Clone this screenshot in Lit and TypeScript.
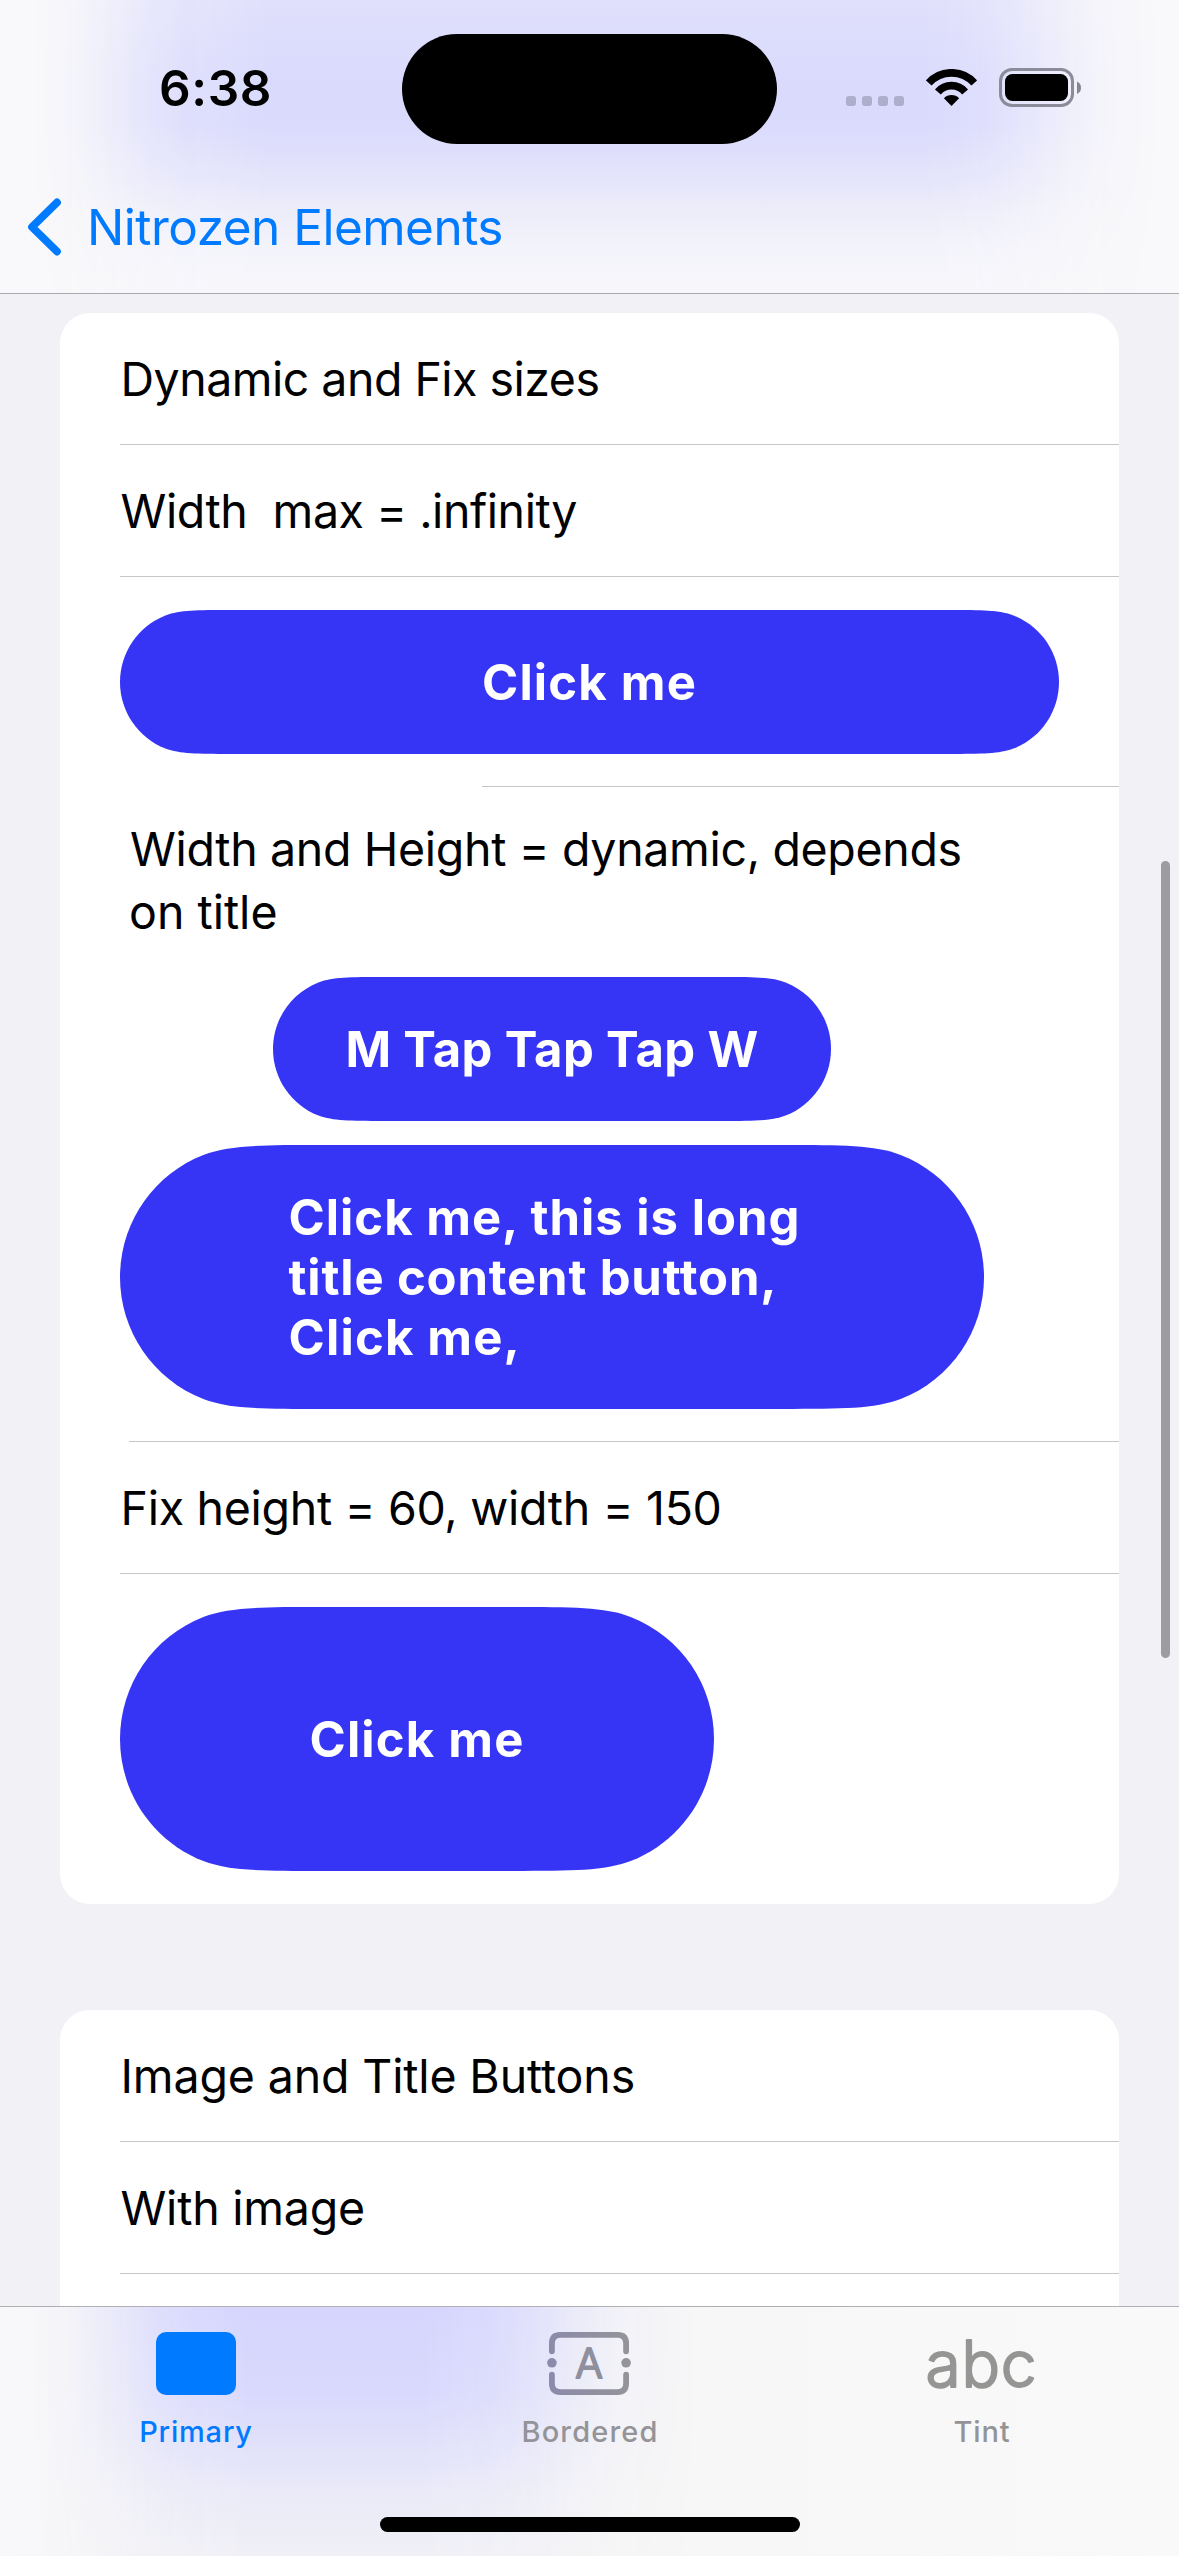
import { LitElement, html, svg, css, nothing } from "lit";
import { customElement, property } from "lit/decorators.js";

type Row =
  | { kind: "text"; text: string; tracking: number }
  | { kind: "button"; title: string; width: number; height: number; lineInset: number | null }
  | { kind: "stack" };

const FIRST_SECTION: Row[] = [
  { kind: "text", text: "Dynamic and Fix sizes", tracking: -0.51 },
  { kind: "text", text: "Width\u00a0 max = .infinity", tracking: -0.43 },
  { kind: "button", title: "Click me", width: 939, height: 144, lineInset: 422 },
  { kind: "stack" },
  { kind: "text", text: "Fix height = 60, width = 150", tracking: -0.29 },
  { kind: "button", title: "Click me", width: 594, height: 264, lineInset: null },
];

const SECOND_SECTION: Row[] = [
  { kind: "text", text: "Image and Title Buttons", tracking: -0.14 },
  { kind: "text", text: "With image", tracking: -0.22 },
];

/** Capsule whose straight edges ease into the round ends (continuous corners). */
function capsulePath(w: number, h: number): string {
  const r = h / 2;
  const corner = (fx: (v: number) => number, fy: (v: number) => number, out: boolean) => {
    const pts = [
      [1.5287, 0], [1.07, 0], [0.832, 0], [0.6315, 0.0749],
      [0.2505, 0.2235], [0, 0.59], [0, 1],
    ].map(([x, y]) => `${fx(x * r).toFixed(2)} ${fy(y * r).toFixed(2)}`);
    const p = out ? pts : pts.reverse();
    return `L${p[0]}C${p[1]} ${p[2]} ${p[3]}C${p[4]} ${p[5]} ${p[6]}`;
  };
  const left = (v: number) => v;
  const right = (v: number) => w - v;
  const top = (v: number) => v;
  const bottom = (v: number) => h - v;
  return (
    `M${w / 2} 0` + corner(right, top, true) + corner(right, bottom, false) +
    corner(left, bottom, true) + corner(left, top, false) + "Z"
  );
}

@customElement("pill-button")
class PillButton extends LitElement {
  @property({ type: Number }) width = 0;
  @property({ type: Number }) height = 0;

  static styles = css`
    :host { display: block; }
    .pill {
      position: relative;
      display: flex;
      align-items: center;
      justify-content: center;
      box-sizing: border-box;
      padding: 2px 0 0;
      border: 0;
      background: none;
      color: #fff;
      font: 700 49px/60px Inter, "Liberation Sans", sans-serif;
      text-align: left;
    }
    .shape { position: absolute; left: 0; top: 0; }
    .label { position: relative; white-space: nowrap; }
  `;

  render() {
    const { width: w, height: h } = this;
    return html`
      <button class="pill" style="width:${w}px;height:${h}px">
        <svg class="shape" width=${w} height=${h} viewBox="0 0 ${w} ${h}">
          ${svg`<path d=${capsulePath(w, h)} fill="#3634f5"></path>`}
        </svg>
        <span class="label"><slot></slot></span>
      </button>
    `;
  }
}

@customElement("status-bar")
class StatusBar extends LitElement {
  static styles = css`
    :host { display: block; }
    .status {
      position: relative;
      display: flex;
      align-items: center;
      height: 175px;
      padding: 0 98px 0 159px;
    }
    .time { font-weight: 600; font-size: 49.5px; line-height: 60px; letter-spacing: 0.6px; color: #000; }
    .island {
      position: absolute;
      left: 402px;
      top: 34px;
      width: 375px;
      height: 110px;
      border-radius: 55px;
      background: #000;
    }
    .icons { display: flex; align-items: center; gap: 22px; margin-left: auto; }
    .cell { display: flex; gap: 6px; padding-top: 27px; }
    .dot { width: 10px; height: 10px; border-radius: 3px; background: #afadcc; }
    svg { display: block; }
  `;

  render() {
    return html`
      <div class="status">
        <span class="time">6:38</span>
        <div class="island"></div>
        <div class="icons">
          <div class="cell">${[0, 1, 2, 3].map(() => html`<i class="dot"></i>`)}</div>
          <svg width="51" height="37" viewBox="0 0 51 37">
            <g fill="none" stroke="#000" stroke-width="7.7">
              <path d="M2.7 14A30.6 30.6 0 0 1 48.3 14"></path>
              <path d="M11.9 22.9A17.9 17.9 0 0 1 39.1 22.9"></path>
            </g>
            <path d="M25.5 37L17.9 29.2A10.6 10.6 0 0 1 33.1 29.2Z"></path>
          </svg>
          <svg width="82" height="39" viewBox="0 0 82 39">
            <rect x="1.5" y="1.5" width="72" height="36" rx="11.5" fill="none" stroke="#8c8b9a" stroke-width="3"></rect>
            <rect x="6" y="6" width="63" height="27" rx="7.5"></rect>
            <path d="M78 13.5C80.8 14.8 82 17 82 19.7C82 22.4 80.8 24.6 78 26Z" fill="#86868e"></path>
          </svg>
        </div>
      </div>
    `;
  }
}

@customElement("tab-bar")
class TabBar extends LitElement {
  static styles = css`
    :host { display: block; }
    .bar {
      position: relative;
      display: flex;
      flex-direction: column;
      justify-content: space-between;
      align-items: center;
      box-sizing: border-box;
      height: 250px;
      border-top: 1px solid #b0b0b3;
      background: linear-gradient(90deg, #f8f8fb, #f7f7f8 10%, #f7f7f7 60%, #f9f9fa);
    }
    .glow {
      position: absolute;
      inset: 0;
      background: linear-gradient(#d5d5fe, #d9d9fd 34%, #e1e1fb 55%, #eaeaf8 75%, #f0f0f6);
      mask-image: linear-gradient(90deg, transparent 30px, rgba(0,0,0,.08) 65px, rgba(0,0,0,.24) 92px,
        rgba(0,0,0,.45) 124px, rgba(0,0,0,.7) 155px, rgba(0,0,0,.86) 190px, #000 250px, #000 420px,
        rgba(0,0,0,.86) 490px, rgba(0,0,0,.62) 536px, rgba(0,0,0,.36) 575px, rgba(0,0,0,.15) 617px, transparent 700px);
    }
    .tabs { position: relative; display: grid; grid-template-columns: repeat(3, 393px); }
    .tab { display: flex; flex-direction: column; align-items: center; padding: 25px 1px 0 0; color: #949498; }
    .tab.active { color: #007aff; }
    .art { display: flex; align-items: center; justify-content: center; height: 63px; }
    .art svg { display: block; overflow: visible; }
    .label { margin-top: 18px; font-weight: 500; font-size: 29px; line-height: 37px; }
    .wide { padding-left: 2px; letter-spacing: 1.15px; }
    .near { letter-spacing: 0.8px; }
    .block { width: 80px; height: 63px; border-radius: 10px; background: #007aff; }
    .home { position: relative; width: 420px; height: 15px; margin-bottom: 24px; border-radius: 8px; background: #000; }
  `;

  render() {
    return html`
      <div class="bar">
        <div class="glow"></div>
        <div class="tabs">
          <div class="tab active">
            <div class="art"><div class="block"></div></div>
            <span class="label near">Primary</span>
          </div>
          <div class="tab">
            <div class="art">
              <svg width="84" height="63" viewBox="0 0 84 63" font-family="Inter, sans-serif">
                <defs>
                  <linearGradient id="tone" gradientUnits="userSpaceOnUse" x1="0" y1="0" x2="84" y2="0">
                    <stop offset="0" stop-color="#8b8aab"></stop>
                    <stop offset="1" stop-color="#949498"></stop>
                  </linearGradient>
                </defs>
                <g fill="none" stroke="url(#tone)" stroke-width="5.8" stroke-linecap="round">
                  <path d="M4.9 19.3V11.4Q4.9 2.9 13.4 2.9H70.6Q79.1 2.9 79.1 11.4V19.3"></path>
                  <path d="M4.9 42.7V51.6Q4.9 60.1 13.4 60.1H70.6Q79.1 60.1 79.1 51.6V42.7"></path>
                </g>
                <g fill="url(#tone)">
                  <circle cx="4.9" cy="30.8" r="4.8"></circle>
                  <circle cx="79.1" cy="30.8" r="4.8"></circle>
                </g>
                <text x="42" y="46.2" text-anchor="middle" font-size="41" font-weight="300" fill="#8f8f9e"
                  stroke="#8f8f9e" stroke-width="2" stroke-linejoin="round">A</text>
              </svg>
            </div>
            <span class="label wide">Bordered</span>
          </div>
          <div class="tab">
            <div class="art">
              <svg width="110" height="63" viewBox="0 0 110 63" font-family="Inter, sans-serif">
                <text x="54.5" y="55.2" text-anchor="middle" font-size="64" font-weight="300" letter-spacing="0.8"
                  fill="#959694" stroke="#959694" stroke-width="2" stroke-linejoin="round">abc</text>
              </svg>
            </div>
            <span class="label near">Tint</span>
          </div>
        </div>
        <div class="home"></div>
      </div>
    `;
  }
}

@customElement("app-root")
class AppRoot extends LitElement {
  static styles = css`
    :host {
      position: relative;
      display: flex;
      flex-direction: column;
      width: 1179px;
      height: 2556px;
      overflow: hidden;
      background: #f2f1f6;
      font-family: Inter, "Liberation Sans", sans-serif;
      color: #000;
    }
    .header {
      position: relative;
      box-sizing: border-box;
      height: 294px;
      flex: none;
      border-bottom: 1px solid #a9a9ae;
      background: #f9f9fb;
    }
    .glow {
      position: absolute;
      inset: 0;
      background: linear-gradient(#e0e0fc, #dadafd 27%, #dadafd 42%, #dfdffc 52%, #e5e5fb 62%, #ececfa 71%, #f3f3fb 84%, #f7f7fb);
      mask-image: linear-gradient(90deg, transparent 30px, rgba(0,0,0,.08) 60px, rgba(0,0,0,.25) 92px,
        rgba(0,0,0,.45) 120px, rgba(0,0,0,.66) 148px, rgba(0,0,0,.84) 185px, #000 270px, #000 920px,
        rgba(0,0,0,.93) 962px, rgba(0,0,0,.78) 998px, rgba(0,0,0,.55) 1034px, rgba(0,0,0,.3) 1070px,
        rgba(0,0,0,.13) 1104px, transparent 1160px);
    }
    status-bar { position: relative; }
    .nav { position: relative; display: flex; align-items: center; gap: 23px; height: 104px; padding-left: 24px; color: #007aff; }
    .chevron { display: block; }
    .back { font-size: 49.5px; line-height: 60px; letter-spacing: -0.52px; }
    .list { flex: 1; min-height: 0; overflow: hidden; padding: 19px 60px 0; }
    .card { background: #fff; border-radius: 30px; }
    .card + .card { margin-top: 106px; }
    .tail { height: 120px; }
    .text { display: flex; flex-direction: column; height: 132px; padding-left: 60px; }
    .text .line { margin-top: auto; }
    .caption { padding: 36px 0 0 0.5px; font-size: 46.5px; line-height: 60px; white-space: nowrap; }
    .line { height: 1px; background: #c6c6c8; }
    .action { padding: 33px 0 0 60px; }
    .spacer { height: 32px; }
    .spacer.last { height: 33px; }
    .indent { margin-left: auto; }
    .stack { display: flex; flex-direction: column; align-items: center; width: 864px; padding: 31px 0 32px 60px; }
    .note { align-self: stretch; padding-left: 10px; font-size: 46.5px; line-height: 63px; letter-spacing: -0.33px; }
    .note .second { margin-left: -1px; letter-spacing: 0; }
    .single { margin-top: 33px; }
    .multi { margin-top: 24px; }
    .after { margin-left: 69px; }
    .click { letter-spacing: 1.18px; }
    .taps { letter-spacing: 0.33px; }
    .block { display: block; padding-right: 15px; }
    .long { letter-spacing: 0.99px; }
    .mid { letter-spacing: 0.83px; }
    .scroll { position: absolute; right: 9px; top: 861px; width: 9px; height: 797px; border-radius: 5px; background: #9d9ca1; }
  `;

  private renderRow(row: Row) {
    if (row.kind === "text") {
      return html`
        <div class="text">
          <span class="caption" style="letter-spacing:${row.tracking}px">${row.text}</span>
          <div class="line"></div>
        </div>
      `;
    }
    if (row.kind === "button") {
      return html`
        <div class="action">
          <pill-button .width=${row.width} .height=${row.height}><span class="click">${row.title}</span></pill-button>
        </div>
        <div class="spacer ${row.lineInset === null ? "last" : ""}"></div>
        ${row.lineInset === null
          ? nothing
          : html`<div class="line indent" style="width:${1059 - row.lineInset}px"></div>`}
      `;
    }
    return html`
      <div class="stack">
        <div class="note">Width and Height = dynamic, depends<br /><span class="second">on title</span></div>
        <pill-button class="single" .width=${558} .height=${144}><span class="taps">M Tap Tap Tap W</span></pill-button>
        <pill-button class="multi" .width=${864} .height=${264}>
          <span class="block long">Click me, this is long</span>
          <span class="block mid">title content button,</span>
          <span class="block click">Click me,</span>
        </pill-button>
      </div>
      <div class="line after"></div>
    `;
  }

  render() {
    return html`
      <header class="header">
        <div class="glow"></div>
        <status-bar></status-bar>
        <div class="nav">
          <svg class="chevron" width="40" height="60" viewBox="0 0 40 60">
            <path d="M33 5.5L8 30L33 54.5" fill="none" stroke="#007aff" stroke-width="7.8" stroke-linecap="round"
              stroke-linejoin="round"></path>
          </svg>
          <span class="back">Nitrozen Elements</span>
        </div>
      </header>
      <main class="list">
        <section class="card">${FIRST_SECTION.map((r) => this.renderRow(r))}</section>
        <section class="card">
          ${SECOND_SECTION.map((r) => this.renderRow(r))}
          <div class="tail"></div>
        </section>
      </main>
      <tab-bar></tab-bar>
      <div class="scroll"></div>
    `;
  }
}
